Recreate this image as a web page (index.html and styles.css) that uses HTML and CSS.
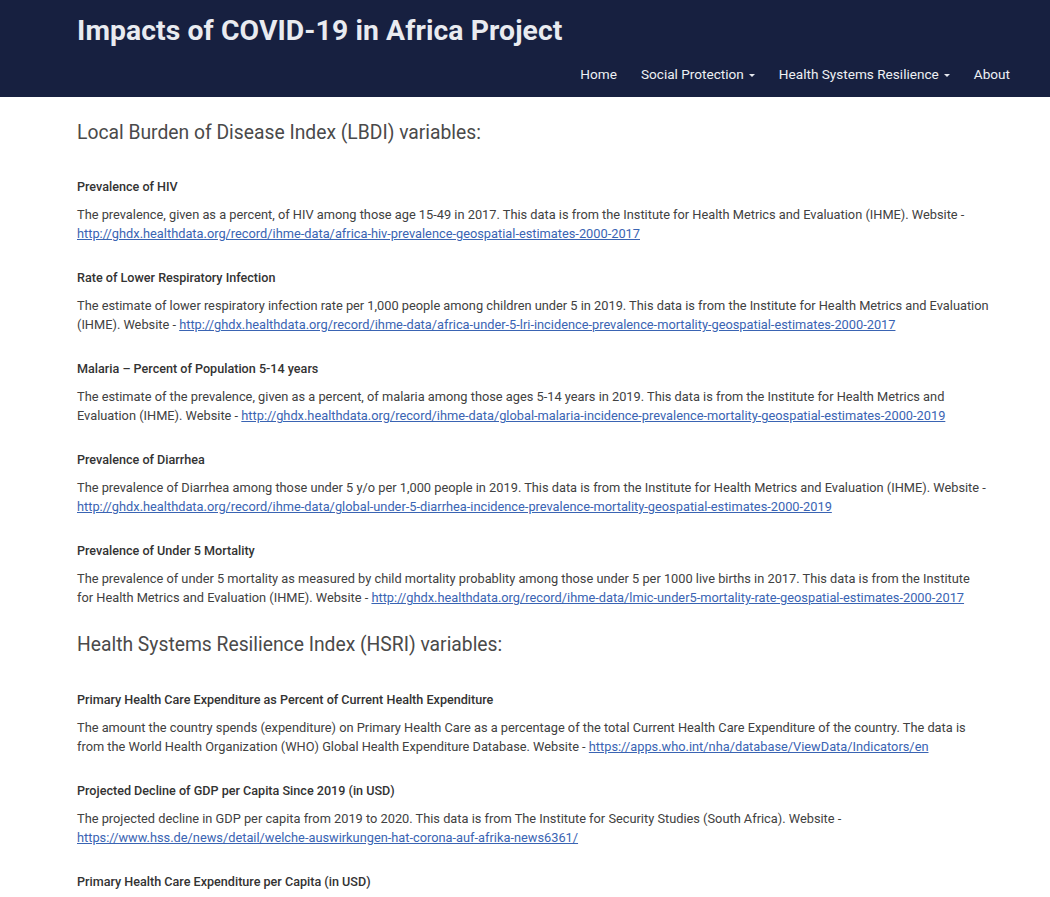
FILE: index.html
```html
<!DOCTYPE html>
<html>
<head>
<meta charset="utf-8">
<link rel="stylesheet" href="styles.css">
</head>
<body>
<header class="topbar">
  <div class="topbar-inner">
    <div class="brand">Impacts of COVID-19 in Africa Project</div>
    <nav class="nav">
      <a class="nav-item" href="#">Home</a>
      <a class="nav-item" href="#">Social Protection <span class="caret"></span></a>
      <a class="nav-item" href="#">Health Systems Resilience <span class="caret"></span></a>
      <a class="nav-item" href="#">About</a>
    </nav>
  </div>
</header>
<main class="content">
  <h3 class="section-title">Local Burden of Disease Index (LBDI) variables:</h3>
  <section class="var-list">
    <div class="var">
      <h4 class="var-name">Prevalence of HIV</h4>
      <p class="var-desc">The prevalence, given as a percent, of HIV among those age 15-49 in 2017. This data is from the Institute for Health Metrics and Evaluation (IHME). Website - <a href="#">http://ghdx.healthdata.org/record/ihme-data/africa-hiv-prevalence-geospatial-estimates-2000-2017</a></p>
    </div>
    <div class="var">
      <h4 class="var-name">Rate of Lower Respiratory Infection</h4>
      <p class="var-desc">The estimate of lower respiratory infection rate per 1,000 people among children under 5 in 2019. This data is from the Institute for Health Metrics and Evaluation (IHME). Website - <a href="#">http://ghdx.healthdata.org/record/ihme-data/africa-under-5-lri-incidence-prevalence-mortality-geospatial-estimates-2000-2017</a></p>
    </div>
    <div class="var">
      <h4 class="var-name">Malaria – Percent of Population 5-14 years</h4>
      <p class="var-desc">The estimate of the prevalence, given as a percent, of malaria among those ages 5-14 years in 2019. This data is from the Institute for Health Metrics and Evaluation (IHME). Website - <a href="#">http://ghdx.healthdata.org/record/ihme-data/global-malaria-incidence-prevalence-mortality-geospatial-estimates-2000-2019</a></p>
    </div>
    <div class="var">
      <h4 class="var-name">Prevalence of Diarrhea</h4>
      <p class="var-desc">The prevalence of Diarrhea among those under 5 y/o per 1,000 people in 2019. This data is from the Institute for Health Metrics and Evaluation (IHME). Website - <a href="#">http://ghdx.healthdata.org/record/ihme-data/global-under-5-diarrhea-incidence-prevalence-mortality-geospatial-estimates-2000-2019</a></p>
    </div>
    <div class="var">
      <h4 class="var-name">Prevalence of Under 5 Mortality</h4>
      <p class="var-desc">The prevalence of under 5 mortality as measured by child mortality probablity among those under 5 per 1000 live births in 2017. This data is from the Institute for Health Metrics and Evaluation (IHME). Website - <a href="#">http://ghdx.healthdata.org/record/ihme-data/lmic-under5-mortality-rate-geospatial-estimates-2000-2017</a></p>
    </div>
  </section>
  <h3 class="section-title">Health Systems Resilience Index (HSRI) variables:</h3>
  <section class="var-list">
    <div class="var">
      <h4 class="var-name">Primary Health Care Expenditure as Percent of Current Health Expenditure</h4>
      <p class="var-desc">The amount the country spends (expenditure) on Primary Health Care as a percentage of the total Current Health Care Expenditure of the country. The data is from the World Health Organization (WHO) Global Health Expenditure Database. Website - <a href="#">https://apps.who.int/nha/database/ViewData/Indicators/en</a></p>
    </div>
    <div class="var">
      <h4 class="var-name">Projected Decline of GDP per Capita Since 2019 (in USD)</h4>
      <p class="var-desc">The projected decline in GDP per capita from 2019 to 2020. This data is from The Institute for Security Studies (South Africa). Website - <a href="#">https://www.hss.de/news/detail/welche-auswirkungen-hat-corona-auf-afrika-news6361/</a></p>
    </div>
    <div class="var">
      <h4 class="var-name">Primary Health Care Expenditure per Capita (in USD)</h4>
      <p class="var-desc">The amount the country spends on Primary Health Care per person. This data is from the World Health Organization (WHO) Global Health Expenditure Database.</p>
    </div>
  </section>
</main>
</body>
</html>
```
FILE: styles.css
```css
html, body {
  margin: 0;
  padding: 0;
  background: #ffffff;
  font-family: Roboto, "Liberation Sans", sans-serif;
  color: #404040;
}

.topbar {
  background: #172040;
  height: 97px;
}

.topbar-inner {
  padding: 0 40px 0 77px;
  display: flex;
  flex-direction: column;
}

.brand {
  font-size: 28.3px;
  font-weight: 700;
  color: #e9ebf0;
  line-height: 34px;
  padding-top: 14px;
  letter-spacing: 0.1px;
}

.nav {
  display: flex;
  justify-content: flex-end;
  gap: 24px;
  margin-top: 15px;
  line-height: 22px;
}

.nav-item {
  color: #eef0f4;
  font-size: 13.6px;
  text-decoration: none;
  display: flex;
  align-items: center;
  gap: 5px;
}

.caret {
  display: inline-block;
  width: 0;
  height: 0;
  border-left: 3.5px solid transparent;
  border-right: 3.5px solid transparent;
  border-top: 3.5px solid #e6e8ee;
  margin-top: 2px;
}

.content {
  padding: 0 0 40px 77px;
  width: 911.65px;
}

.section-title {
  font-size: 19.3px;
  font-weight: 400;
  line-height: 22px;
  color: #4a4a4a;
  margin: 25px 0 35px;
}

.var-list + .section-title {
  margin-top: 27px;
  margin-bottom: 36px;
}

.var {
  margin-bottom: 27px;
}

.var-name {
  font-size: 12.6px;
  font-weight: 500;
  line-height: 16px;
  color: #333333;
  margin: 0 0 10px;
}

.var-desc {
  font-size: 12.8px;
  line-height: 19px;
  margin: 0;
  color: #414141;
}

.var-desc a {
  color: #3a64b3;
  text-decoration: underline;
}
```
